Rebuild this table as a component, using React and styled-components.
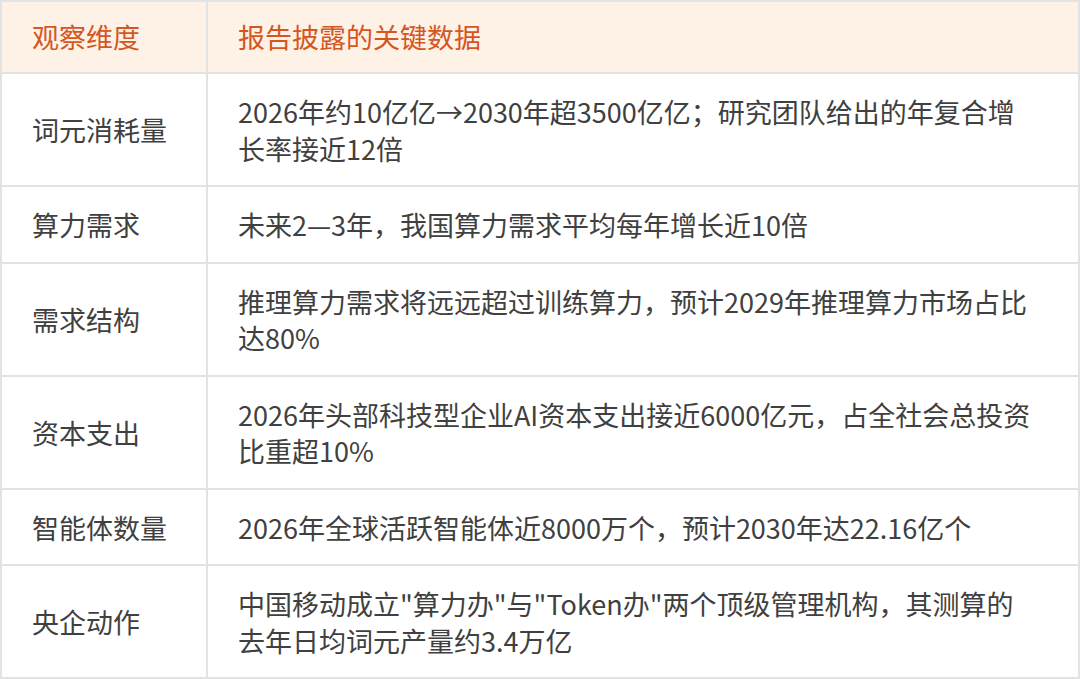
import styled, { createGlobalStyle } from "styled-components";

const GlobalStyle = createGlobalStyle`
  html, body {
    margin: 0;
    padding: 0;
    background: #ffffff;
  }
  body {
    font-family: "Noto Sans CJK SC", "Noto Sans", sans-serif;
  }
`;

const rows = [
  {
    label: "词元消耗量",
    text: "2026年约10亿亿→2030年超3500亿亿；研究团队给出的年复合增长率接近12倍",
  },
  { label: "算力需求", text: "未来2—3年，我国算力需求平均每年增长近10倍" },
  {
    label: "需求结构",
    text: "推理算力需求将远远超过训练算力，预计2029年推理算力市场占比达80%",
  },
  {
    label: "资本支出",
    text: "2026年头部科技型企业AI资本支出接近6000亿元，占全社会总投资比重超10%",
  },
  {
    label: "智能体数量",
    text: "2026年全球活跃智能体近8000万个，预计2030年达22.16亿个",
  },
  {
    label: "央企动作",
    text: '中国移动成立"算力办"与"Token办"两个顶级管理机构，其测算的去年日均词元产量约3.4万亿',
  },
];

function App() {
  return (
    <>
      <GlobalStyle />
      <Table>
        <colgroup>
          <col style={{ width: 206 }} />
          <col />
        </colgroup>
        <thead>
          <tr>
            <HeadCell>观察维度</HeadCell>
            <HeadCell $data>报告披露的关键数据</HeadCell>
          </tr>
        </thead>
        <tbody>
          {rows.map((row) => (
            <tr key={row.label}>
              <Cell>{row.label}</Cell>
              <Cell $data>{row.text}</Cell>
            </tr>
          ))}
        </tbody>
      </Table>
    </>
  );
}

export default App;

const Table = styled.table`
  width: 1080px;
  height: 679px;
  border-collapse: collapse;
  table-layout: fixed;
  font-size: 27px;
  box-sizing: border-box;
`;

const HeadCell = styled.th`
  border: 2px solid #e3e3e3;
  background-color: #fef1e6;
  color: #d5561f;
  font-weight: 400;
  text-align: left;
  padding: 17px ${(p) => (p.$data ? "44px" : "4px")} 17px 30px;
  line-height: 36px;
  white-space: nowrap;
`;

const Cell = styled.td`
  border: 2px solid #e3e3e3;
  color: #404040;
  padding: 20px ${(p) => (p.$data ? "44px" : "4px")} 18px 30px;
  line-height: 36.5px;
  vertical-align: middle;
  word-break: break-all;
  white-space: ${(p) => (p.$data ? "normal" : "nowrap")};
`;
